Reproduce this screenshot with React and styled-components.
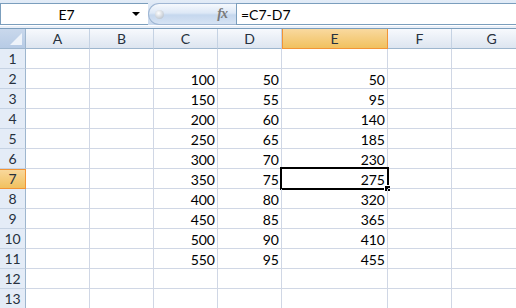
import React from "react";
import styled, { createGlobalStyle, css } from "styled-components";

const GlobalStyle = createGlobalStyle`
  html, body {
    margin: 0;
    padding: 0;
    background: #ffffff;
    overflow: hidden;
  }
  body {
    font-family: Lato, "Liberation Sans", sans-serif;
  }
`;

const columns = ["A", "B", "C", "D", "E", "F", "G"];
const widths = [64, 64, 64, 64, 106, 64, 80];

const rows = Array.from({ length: 13 }, (_, i) => {
  const n = i + 1;
  if (n < 2 || n > 11) return { n, values: {} };
  const c = 100 + (n - 2) * 50;
  const d = 50 + (n - 2) * 5;
  return { n, values: { C: c, D: d, E: c - d } };
});

export default function App() {
  return (
    <>
      <GlobalStyle />
      <Window>
        <FormulaBar>
          <NameBox>
            <NameText>E7</NameText>
            <DropArrow />
          </NameBox>
          <FxPill>
            <Grip />
            <FxLabel>fx</FxLabel>
          </FxPill>
          <FormulaInput>=C7-D7</FormulaInput>
        </FormulaBar>
        <Separator />
        <Sheet $cols={widths}>
          <Corner>
            <CornerTriangle />
          </Corner>
          {columns.map((c) => (
            <ColHeader key={c} $selected={c === "E"}>
              {c}
            </ColHeader>
          ))}
          {rows.map((r) => (
            <React.Fragment key={r.n}>
              <RowHeader $selected={r.n === 7}>{r.n}</RowHeader>
              {columns.map((c) => (
                <Cell key={c}>
                  {r.values[c]}
                  {r.n === 7 && c === "E" && (
                    <ActiveBox>
                      <FillHandle />
                    </ActiveBox>
                  )}
                </Cell>
              ))}
            </React.Fragment>
          ))}
        </Sheet>
      </Window>
    </>
  );
}

const Window = styled.div`
  width: 516px;
  height: 308px;
  overflow: hidden;
  background: #ffffff;
`;

const FormulaBar = styled.div`
  display: flex;
  align-items: stretch;
  height: 25px;
  box-sizing: border-box;
  padding-top: 3px;
  background: linear-gradient(#e3ecf7, #c9d9ee);
`;

const NameBox = styled.div`
  display: flex;
  align-items: center;
  width: 148px;
  box-sizing: border-box;
  background: #ffffff;
  border: 1px solid #7b9ebd;
  border-right: none;
`;

const NameText = styled.div`
  flex: 1;
  text-align: center;
  font-size: 14px;
  color: #000000;
  padding-left: 4px;
`;

const DropArrow = styled.div`
  width: 0;
  height: 0;
  margin: 0 8px 0 4px;
  border-left: 4px solid transparent;
  border-right: 4px solid transparent;
  border-top: 4px solid #000000;
`;

const FxPill = styled.div`
  display: flex;
  align-items: center;
  width: 88px;
  box-sizing: border-box;
  border: 1px solid #9fb6d3;
  border-right: none;
  border-radius: 11px 0 0 11px;
  background: linear-gradient(#f6f9fd 0%, #dde8f6 45%, #c5d7ee 55%, #d6e3f3 100%);
`;

const Grip = styled.div`
  width: 9px;
  height: 9px;
  margin-left: 6px;
  border-radius: 50%;
  background: radial-gradient(circle at 40% 35%, #ffffff, #a9b3bf);
`;

const FxLabel = styled.div`
  margin-left: auto;
  margin-right: 9px;
  font-family: "Liberation Serif", serif;
  font-style: italic;
  font-weight: bold;
  font-size: 14px;
  color: #7a7a7a;
  letter-spacing: -1px;
`;

const FormulaInput = styled.div`
  flex: 1;
  display: flex;
  align-items: center;
  padding-left: 4px;
  box-sizing: border-box;
  background: #ffffff;
  border: 1px solid #7b9ebd;
  border-right: none;
  font-size: 14px;
  color: #000000;
`;

const Separator = styled.div`
  height: 4px;
  box-sizing: border-box;
  background: #e9eff8;
  border-top: 1px solid #ffffff;
  border-bottom: 1px solid #7b9ebd;
`;

const Sheet = styled.div`
  display: grid;
  grid-template-columns: 26px ${(p) => p.$cols.map((w) => `${w}px`).join(" ")};
  grid-auto-rows: 20px;
`;

const headerBase = css`
  box-sizing: border-box;
  display: flex;
  align-items: center;
  justify-content: center;
  font-size: 14px;
  color: #27313e;
`;

const Corner = styled.div`
  position: relative;
  box-sizing: border-box;
  background: linear-gradient(#c9d8ec, #b7cbe5);
  border-right: 1px solid #9eb6ce;
  border-bottom: 1px solid #9eb6ce;
`;

const CornerTriangle = styled.div`
  position: absolute;
  right: 3px;
  bottom: 3px;
  width: 0;
  height: 0;
  border-left: 12px solid transparent;
  border-bottom: 12px solid #eef3fa;
`;

const ColHeader = styled.div`
  ${headerBase};
  border-right: 1px solid #c5d2e3;
  border-bottom: 1px solid #9eb6ce;
  background: linear-gradient(#f7f9fd, #dde5f0);
  ${(p) =>
    p.$selected &&
    css`
      background: linear-gradient(#f9d99f, #f1c15f);
      border-right-color: #f29436;
      border-bottom-color: #f29436;
      box-shadow: inset 1px 0 0 #f29436;
    `}
`;

const RowHeader = styled.div`
  ${headerBase};
  border-right: 1px solid #9eb6ce;
  border-bottom: 1px solid #c5d2e3;
  background: #e4ecf7;
  ${(p) =>
    p.$selected &&
    css`
      background: linear-gradient(#f9d99f, #f1c15f);
      border-right-color: #f29436;
      border-bottom-color: #f29436;
      box-shadow: inset 0 1px 0 #f29436;
    `}
`;

const Cell = styled.div`
  position: relative;
  box-sizing: border-box;
  display: flex;
  align-items: center;
  justify-content: flex-end;
  padding: 1px 2px 0 0;
  border-right: 1px solid #d0d7e5;
  border-bottom: 1px solid #d0d7e5;
  font-size: 14px;
  color: #000000;
`;

const ActiveBox = styled.div`
  position: absolute;
  left: -2px;
  top: -2px;
  right: -2px;
  bottom: -2px;
  border: 2px solid #000000;
  pointer-events: none;
`;

const FillHandle = styled.div`
  position: absolute;
  right: -4px;
  bottom: -4px;
  width: 5px;
  height: 5px;
  background: #000000;
  border: 1px solid #ffffff;
`;
